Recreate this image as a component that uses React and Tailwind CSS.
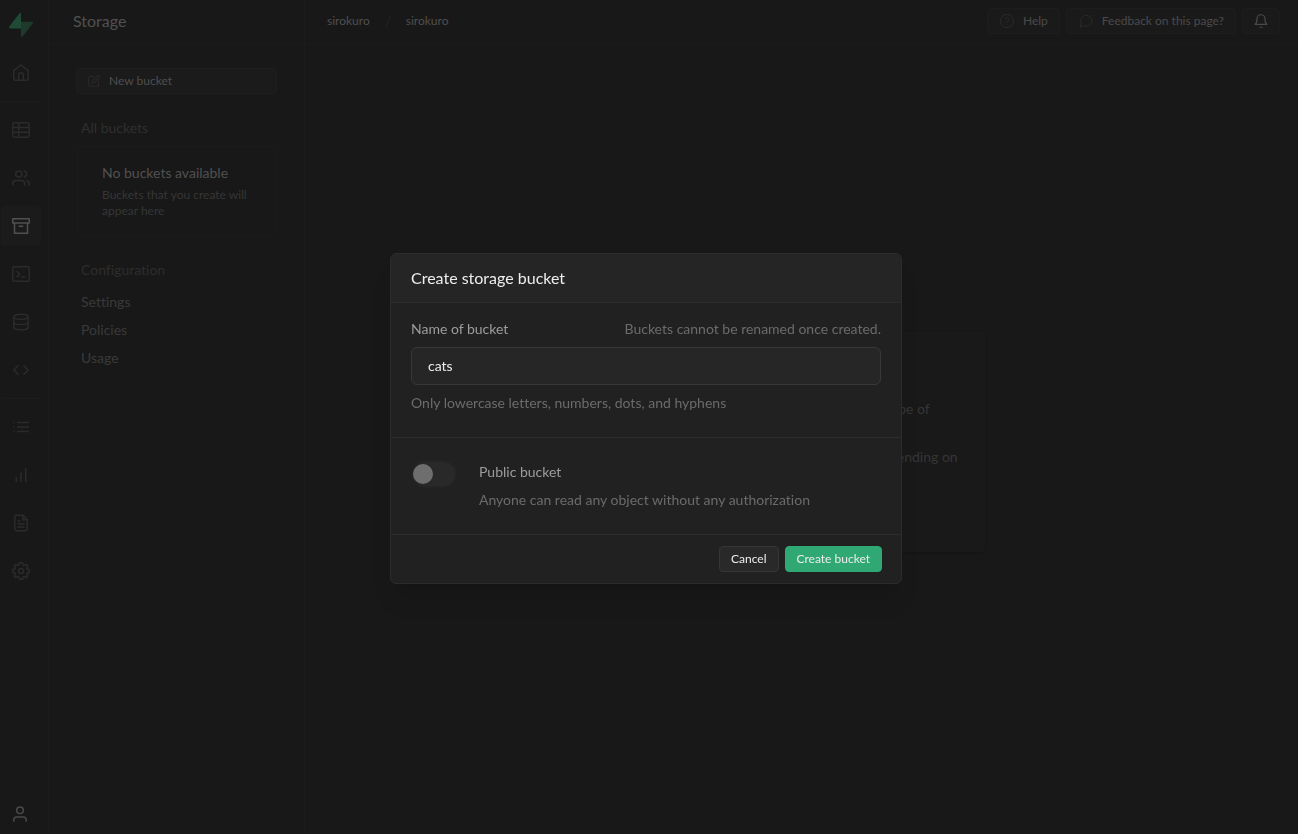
import { useState } from "react";

const Icon = ({ children, className = "size-5", strokeWidth = 1.5 }) => (
  <svg
    viewBox="0 0 20 20"
    fill="none"
    stroke="currentColor"
    strokeWidth={strokeWidth}
    strokeLinecap="round"
    strokeLinejoin="round"
    className={className}
    aria-hidden="true"
  >
    {children}
  </svg>
);

const icons = {
  home: (
    <>
      <path d="M2.8 7.6 10 2l7.2 5.6v8.2c0 .8-.6 1.4-1.4 1.4H4.2c-.8 0-1.4-.6-1.4-1.4z" />
      <path d="M7.7 17.2V11c0-.6.4-1 1-1h2.6c.6 0 1 .4 1 1v6.2" />
    </>
  ),
  table: (
    <>
      <rect x="1.8" y="2.8" width="16.4" height="14.4" rx="1.6" />
      <path d="M1.8 7.5h16.4M1.8 12.3h16.4M7.7 2.8v14.4" />
    </>
  ),
  users: (
    <>
      <circle cx="7.8" cy="6" r="3.1" />
      <path d="M1.8 17v-1.4c0-1.9 1.3-3.1 3.1-3.1h5.6c1.8 0 3.1 1.2 3.1 3.1V17" />
      <path d="M13.2 3c1.4.3 2.4 1.6 2.4 3s-1 2.7-2.4 3M15.9 12.7c1.4.4 2.3 1.5 2.3 2.9V17" />
    </>
  ),
  storage: <path d="M1.8 2.8h16.4V7H1.8zM3.5 7v10.2h13V7M8.3 10.3h3.4" />,
  sql: (
    <>
      <rect x="1.8" y="2.8" width="16.4" height="14.4" rx="1.2" />
      <path d="m6 7.5 2.9 2.7L6 12.9M10.8 13h2.9" />
    </>
  ),
  database: (
    <>
      <ellipse cx="10" cy="4.7" rx="7.2" ry="2.5" />
      <path d="M2.8 4.7v10.6c0 1.4 3.2 2.5 7.2 2.5s7.2-1.1 7.2-2.5V4.7" />
      <path d="M2.8 9.9c0 1.4 3.2 2.5 7.2 2.5s7.2-1.1 7.2-2.5" />
    </>
  ),
  code: <path d="M7 5.7 2.8 10 7 14.3M13 5.7l4.2 4.3-4.2 4.3" />,
  list: <path d="M6.7 5.5h10.6M6.7 10h10.6M6.7 14.5h10.6M2.8 5.5h.1M2.8 10h.1M2.8 14.5h.1" />,
  chart: <path d="M5.3 16.5v-4M10 16.5V8M14.7 16.5v-13" />,
  file: (
    <>
      <path d="M12 2.3H5.4c-.9 0-1.6.7-1.6 1.6v12.2c0 .9.7 1.6 1.6 1.6h9.2c.9 0 1.6-.7 1.6-1.6V6.5z" />
      <path d="M11.8 2.5v4.2H16M7 8h2M7 11h6M7 14h6" />
    </>
  ),
  settings: (
    <>
      <circle cx="10" cy="10" r="2.5" />
      <path d="M8.4 1.8h3.2l.5 2.3 1 .4 2-1.2 1.8 1.9-1.2 1.9.4 1 2.1.4v3l-2.1.5-.4 1 1.2 1.9-1.9 1.8-1.9-1.2-1 .4-.5 2.3H8.4l-.5-2.3-1-.4L5 16.7l-1.9-1.8L4.3 13l-.4-1-2.1-.5v-3l2.1-.4.4-1-1.2-1.9L5 3.3l1.9 1.2 1-.4z" />
    </>
  ),
  user: (
    <>
      <circle cx="10" cy="6.3" r="3.3" />
      <path d="M3.8 17.2v-1.3c0-1.7 1.2-2.9 2.9-2.9h6.6c1.7 0 2.9 1.2 2.9 2.9v1.3" />
    </>
  ),
  edit: (
    <>
      <path d="M9.5 3.5H4c-.8 0-1.5.7-1.5 1.5v11c0 .8.7 1.5 1.5 1.5h11c.8 0 1.5-.7 1.5-1.5v-5.5" />
      <path d="M15.3 2.3a1.7 1.7 0 0 1 2.4 2.4L10.5 12l-3.2.8.8-3.2z" />
    </>
  ),
  help: (
    <>
      <circle cx="10" cy="10" r="8.3" />
      <path d="M7.6 7.5c.3-1.1 1.3-1.8 2.5-1.7 1.3 0 2.3 1 2.3 2.2 0 1.7-2.4 2-2.4 3.3M10 14v.1" />
    </>
  ),
  message: <path d="M17.5 9.6a7 7 0 0 1-10.2 6.3L2.5 17.5l1.6-4.8A7 7 0 1 1 17.5 9.6z" />,
  bell: <path d="M15 7.2a5 5 0 0 0-10 0c0 5.4-2.3 7-2.3 7h14.6S15 12.6 15 7.2M8.7 17.8h2.6" />,
};

const navGroups = [
  [{ id: "home", label: "Home" }],
  [
    { id: "table", label: "Table editor" },
    { id: "users", label: "Authentication" },
    { id: "storage", label: "Storage", active: true },
    { id: "sql", label: "SQL editor" },
    { id: "database", label: "Database" },
    { id: "code", label: "Edge functions" },
  ],
  [
    { id: "list", label: "Logs" },
    { id: "chart", label: "Reports" },
    { id: "file", label: "API docs" },
    { id: "settings", label: "Project settings" },
  ],
];

const Logo = () => (
  <svg viewBox="0 0 24 24" className="size-6" aria-hidden="true">
    <path
      d="M12 8.7h10.8c1 0 1.500 1.100.9 1.900L13.700 23.600c-.6.8-1.700.4-1.700-.5z"
      fill="#1d3a2c"
    />
    <path
      d="M12 15.500H1.200c-1 0-1.500-1.100-.9-1.900L10.300.5c.6-.8 1.700-.4 1.700.5z"
      fill="#1f4a36"
    />
  </svg>
);

const NavRail = () => (
  <nav className="flex w-[49px] shrink-0 flex-col border-r border-[#1b1b1b] pt-[13px] pr-[7px] pl-px">
    <a href="#" aria-label="Dashboard" className="mb-4 flex justify-center">
      <Logo />
    </a>
    {navGroups.map((group, i) => (
      <div key={i}>
        {i > 0 && <div className="my-2 h-px bg-[#1c1c1c]" />}
        <ul className="flex flex-col gap-2">
          {group.map((item) => (
            <li key={item.id}>
              <a
                href="#"
                aria-label={item.label}
                className={`flex size-10 items-center justify-center rounded ${
                  item.active ? "bg-[#1b1b1b] text-[#505050]" : "text-[#2b2b2b]"
                }`}
              >
                <Icon>{icons[item.id]}</Icon>
              </a>
            </li>
          ))}
        </ul>
      </div>
    ))}
    <button
      aria-label="Account"
      className="mt-auto flex h-10 w-[38px] items-center justify-center text-[#4a4a4a]"
    >
      <Icon>{icons.user}</Icon>
    </button>
  </nav>
);

const StoragePanel = () => (
  <aside className="w-64 shrink-0 border-r border-[#1b1b1b]">
    <div className="flex h-[45px] items-center border-b border-[#1b1b1b] px-6 pb-0.5">
      <h1 className="text-base text-[#505050]">Storage</h1>
    </div>
    <div className="px-[27px] pt-[23px]">
      <button className="flex h-[26px] w-full items-center gap-2 rounded border border-[#1f1f1f] bg-[#1b1b1b] px-2.5 text-xs text-[#4f4f4f]">
        <Icon className="size-3.5 text-[#2a2a2a]">{icons.edit}</Icon>
        New bucket
      </button>
      <h2 className="mt-6 px-[5px] text-sm text-[#2f2f2f]">All buckets</h2>
      <div className="mx-px mt-2 rounded border border-[#1b1b1b] px-6 py-4">
        <p className="text-sm text-[#505050]">No buckets available</p>
        <p className="mt-1 text-xs text-[#363636]">
          Buckets that you create will appear here
        </p>
      </div>
      <h2 className="mt-6 px-[5px] text-sm text-[#2d2d2d]">Configuration</h2>
      <ul className="mt-3 flex flex-col gap-2 px-[5px] text-sm text-[#3a3a3a]">
        {["Settings", "Policies", "Usage"].map((label) => (
          <li key={label}>
            <a href="#" className="block">
              {label}
            </a>
          </li>
        ))}
      </ul>
    </div>
  </aside>
);

const headerButton =
  "flex h-[26px] items-center gap-2 rounded border border-[#1d1d1d] bg-[#1a1a1a] text-xs text-[#4a4a4a]";

const Header = () => (
  <header className="flex h-[45px] items-center justify-between border-b border-[#1b1b1b] pr-[18px] pb-0.5 pl-[22px]">
    <div className="flex items-center text-xs text-[#4f4f4f]">
      <a href="#">sirokuro</a>
      <svg viewBox="0 0 36 16" className="h-4 w-9 text-[#222222]" aria-hidden="true">
        <path d="m16 14 5-12" stroke="currentColor" />
      </svg>
      <a href="#">sirokuro</a>
    </div>
    <div className="flex gap-1.5">
      <button className={`${headerButton} px-[11px]`}>
        <Icon className="size-4 text-[#2b2b2b]" strokeWidth={1.2}>
          {icons.help}
        </Icon>
        Help
      </button>
      <button className={`${headerButton} px-[11px]`}>
        <Icon className="size-4 text-[#2b2b2b]" strokeWidth={1.2}>
          {icons.message}
        </Icon>
        Feedback on this page?
      </button>
      <button aria-label="Notifications" className={`${headerButton} px-2.5`}>
        <Icon className="size-4">{icons.bell}</Icon>
      </button>
    </div>
  </header>
);

const EmptyState = () => (
  <div className="flex flex-1 items-center justify-center pt-1">
    <div className="w-[366px] rounded border border-[#1a1a1a] bg-[#191919] py-6 pr-4 pl-8 text-sm text-[#363636] shadow-sm">
      <h2 className="mb-4 text-base text-[#505050]">Storage</h2>
      <p className="leading-6">
        Create buckets to store and serve any type of
        <br />
        digital content.
      </p>
      <p className="leading-6">
        Make your buckets private or public depending on
        <br />
        your security preference.
      </p>
      <div className="mt-2 flex gap-2">
        <button className={`${headerButton} px-2.5`}>New bucket</button>
        <button className={`${headerButton} px-2.5`}>About storage</button>
      </div>
    </div>
  </div>
);

const CreateBucketModal = () => {
  const [name, setName] = useState("cats");
  const [isPublic, setIsPublic] = useState(false);

  return (
    <div className="fixed inset-0 flex items-center justify-center pt-[3px] pr-1.5">
      <form
        role="dialog"
        aria-labelledby="modal-title"
        onSubmit={(e) => e.preventDefault()}
        className="w-full max-w-lg overflow-hidden rounded-md border border-[#2c2c2c] bg-[#212121] text-sm text-[#6b6b6b] shadow-xl"
      >
        <div className="border-b border-[#2c2c2c] bg-[#252525] px-5 py-3">
          <h2 id="modal-title" className="text-base text-[#ededed]">
            Create storage bucket
          </h2>
        </div>

        <div className="border-b border-[#2c2c2c] px-5 pt-4 pb-6">
          <div className="flex justify-between">
            <label htmlFor="bucket-name" className="text-[#9c9c9c]">
              Name of bucket
            </label>
            <span>Buckets cannot be renamed once created.</span>
          </div>
          <input
            id="bucket-name"
            type="text"
            value={name}
            onChange={(e) => setName(e.target.value)}
            className="my-2 block h-[38px] w-full rounded-md border border-[#383838] bg-[#262626] px-4 pb-0.5 text-[#ededed] outline-none"
          />
          <p>Only lowercase letters, numbers, dots, and hyphens</p>
        </div>

        <div className="flex gap-[22px] border-b border-[#2c2c2c] px-5 pt-[22px] pb-6">
          <input
            id="public-bucket"
            type="checkbox"
            role="switch"
            checked={isPublic}
            onChange={(e) => setIsPublic(e.target.checked)}
            className="h-7 w-[46px] shrink-0 appearance-none rounded-full border-2 border-[#242424] bg-[#292929] before:block before:size-5 before:translate-y-0.5 before:rounded-full before:bg-[#6e6e6e] checked:bg-[#2fa873] checked:before:translate-x-5"
          />
          <div className="pt-0.5">
            <label htmlFor="public-bucket" className="block text-[#9c9c9c]">
              Public bucket
            </label>
            <p className="mt-2">Anyone can read any object without any authorization</p>
          </div>
        </div>

        <div className="flex justify-end gap-1.5 px-[19px] py-[11px] text-xs text-[#ededed]">
          <button
            type="button"
            className="h-[26px] rounded border border-[#363636] bg-[#292929] px-[11px]"
          >
            Cancel
          </button>
          <button
            type="submit"
            className="h-[26px] rounded border border-[#2fa873] bg-[#2fa873] px-[11px]"
          >
            Create bucket
          </button>
        </div>
      </form>
    </div>
  );
};

const App = () => (
  <div className="flex min-h-screen bg-[#181818] font-['Lato',sans-serif] [font-variant-ligatures:none]">
    <NavRail />
    <StoragePanel />
    <main className="flex min-w-0 flex-1 flex-col">
      <Header />
      <EmptyState />
    </main>
    <CreateBucketModal />
  </div>
);

export default App;
